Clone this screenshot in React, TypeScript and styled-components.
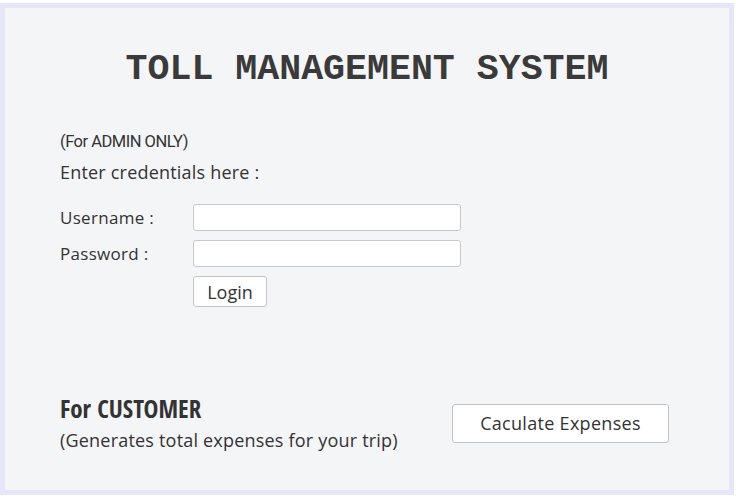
import React from 'react';
import styled, { createGlobalStyle } from 'styled-components';

const GlobalStyle = createGlobalStyle`
	html, body {
		margin: 0;
		padding: 0;
		background: #ffffff;
	}
	body {
		padding-top: 3px;
		font-family: 'Open Sans', 'Noto Sans', sans-serif;
		color: #333333;
	}
`;

const Frame = styled.div`
	width: 724px;
	height: 482px;
	border: 5px solid #e6e6fa;
	background: #f4f5f7;
	display: flex;
	flex-direction: column;
`;

const Title = styled.h1`
	margin: 42px 0 0;
	text-align: center;
	font-family: 'Liberation Mono', 'Courier New', monospace;
	font-weight: bold;
	font-size: 36.6px;
	line-height: 40px;
	color: #3a3a3a;
`;

const Admin = styled.section`
	padding: 0 55px;
	margin-top: 42px;
`;

const Note = styled.div`
	font-family: 'Roboto', sans-serif;
	font-size: 16.5px;
	line-height: 20px;
	letter-spacing: -0.5px;
	color: #333;
`;

const Lead = styled.div`
	margin-top: 8px;
	font-size: 18px;
	line-height: 24px;
	letter-spacing: 0.2px;
`;

const Form = styled.form`
	margin-top: 20px;
	display: grid;
	grid-template-columns: 133px 268px;
	row-gap: 9px;
	align-items: center;
`;

const Label = styled.label`
	font-size: 17px;
	line-height: 27px;
	letter-spacing: 0.3px;
`;

const Field = styled.input`
	box-sizing: border-box;
	height: 27px;
	width: 268px;
	margin: 0;
	border: 1px solid #c8c8c8;
	border-radius: 3px;
	background: #fff;
	outline: none;
`;

const Button = styled.button<{ $wide?: boolean }>`
	box-sizing: border-box;
	height: ${({ $wide }) => ($wide ? '39px' : '31px')};
	width: ${({ $wide }) => ($wide ? '217px' : '74px')};
	padding: 0;
	border: 1px solid #c4c4c4;
	border-radius: 3px;
	background: #fff;
	font-family: 'Open Sans', 'Noto Sans', sans-serif;
	font-size: 18px;
	letter-spacing: ${({ $wide }) => ($wide ? '0.3px' : '0')};
	color: #333;
	justify-self: start;
`;

const Customer = styled.section`
	margin-top: auto;
	margin-bottom: 38px;
	padding: 0 60px 0 55px;
	display: flex;
	justify-content: space-between;
	align-items: center;
`;

const Heading = styled.h3`
	margin: 0;
	font-family: 'Open Sans Condensed', 'Open Sans', sans-serif;
	font-stretch: 75%;
	font-weight: bold;
	font-size: 25px;
	line-height: 28px;
`;

const Sub = styled.div`
	margin-top: 6px;
	font-size: 18px;
	line-height: 24px;
	letter-spacing: 0.2px;
`;

export default function App() {
	return (
		<>
			<GlobalStyle />
			<Frame>
				<Title>TOLL MANAGEMENT SYSTEM</Title>
				<Admin>
					<Note>(For ADMIN ONLY)</Note>
					<Lead>Enter credentials here :</Lead>
					<Form onSubmit={(e) => e.preventDefault()}>
						<Label htmlFor="username">Username :</Label>
						<Field id="username" type="text" />
						<Label htmlFor="password">Password :</Label>
						<Field id="password" type="password" />
						<span />
						<Button type="submit">Login</Button>
					</Form>
				</Admin>
				<Customer>
					<div>
						<Heading>For CUSTOMER</Heading>
						<Sub>(Generates total expenses for your trip)</Sub>
					</div>
					<Button type="button" $wide>
						Caculate Expenses
					</Button>
				</Customer>
			</Frame>
		</>
	);
}
